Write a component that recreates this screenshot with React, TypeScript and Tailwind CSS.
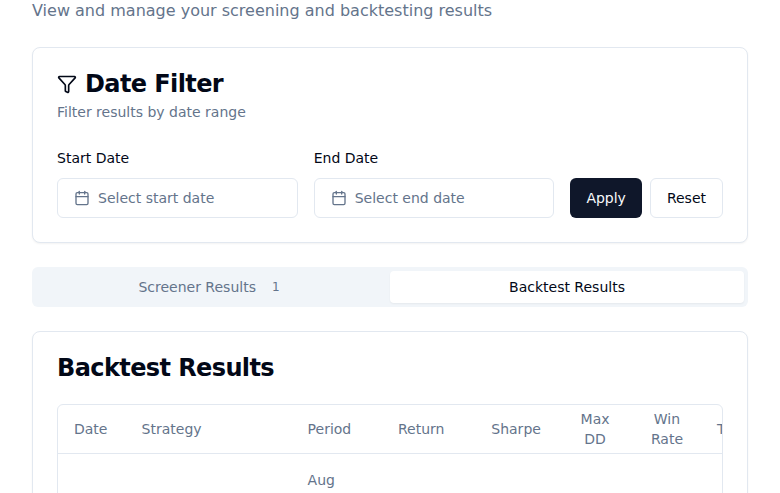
import React from "react";
import { Calendar, Filter } from "lucide-react";

const columns = [
  { label: "Date" },
  { label: "Strategy" },
  { label: "Period" },
  { label: "Return" },
  { label: "Sharpe" },
  { label: "Max DD", center: true },
  { label: "Win Rate", center: true },
  { label: "Trades" },
];

const columnGrid = "grid w-[723px] grid-cols-[67.6px_166px_90.4px_93.3px_81.9px_75.8px_68px_80px]";

function DateField({ label, placeholder }: { label: string; placeholder: string }) {
  return (
    <div className="flex min-w-0 flex-1 flex-col gap-2.5">
      <label className="text-sm leading-5">{label}</label>
      <button className="flex h-10 items-center rounded-md border border-[#e2e8f0] bg-white px-4 text-sm text-[#64748b]">
        <Calendar className="mr-2 size-4" />
        {placeholder}
      </button>
    </div>
  );
}

export default function App() {
  return (
    <div className="h-[493px] overflow-hidden bg-white px-8 font-['DejaVu_Sans',sans-serif] text-[#020817]">
      <p className="-mt-px h-6 text-base leading-6 text-[#64748b]">
        View and manage your screening and backtesting results
      </p>

      <section className="mt-6 h-[196px] rounded-lg border border-[#e2e8f0] bg-white px-6 pt-6 shadow-xs">
        <h2 className="flex items-center gap-2 text-2xl leading-6 font-semibold tracking-tight">
          <Filter className="size-5" />
          Date Filter
        </h2>
        <p className="mt-1.5 text-sm leading-5 text-[#64748b]">Filter results by date range</p>
        <div className="mt-[26px] flex items-end gap-4">
          <DateField label="Start Date" placeholder="Select start date" />
          <DateField label="End Date" placeholder="Select end date" />
          <div className="flex gap-2 text-sm">
            <button className="h-10 rounded-md bg-[#0f172a] px-4 text-slate-50">Apply</button>
            <button className="h-10 rounded-md border border-[#e2e8f0] px-4">Reset</button>
          </div>
        </div>
      </section>

      <div className="mt-6 grid h-10 grid-cols-2 rounded-md bg-[#f1f5f9] p-1 text-sm text-[#64748b]">
        <button className="flex items-center justify-center">
          Screener Results
          <span className="ml-2 px-2 text-xs">1</span>
        </button>
        <button className="rounded-sm bg-white text-[#020817] shadow-xs">Backtest Results</button>
      </div>

      <section className="mt-6 rounded-lg border border-[#e2e8f0] bg-white p-6 shadow-xs">
        <h2 className="text-2xl leading-6 font-semibold tracking-tight">Backtest Results</h2>
        <div className="mt-6 overflow-hidden rounded-md border border-[#e2e8f0] text-sm text-[#64748b]" role="table">
          <div className={`${columnGrid} h-[49px] items-center border-b border-[#e2e8f0]`} role="row">
            {columns.map((column) => (
              <div
                key={column.label}
                role="columnheader"
                className={column.center ? "px-4 text-center" : "px-4 text-left"}
              >
                {column.label}
              </div>
            ))}
          </div>
          <div className={columnGrid} role="row">
            <div className="col-start-3 px-4 py-4 leading-5" role="cell">
              Aug
            </div>
          </div>
        </div>
      </section>
    </div>
  );
}
